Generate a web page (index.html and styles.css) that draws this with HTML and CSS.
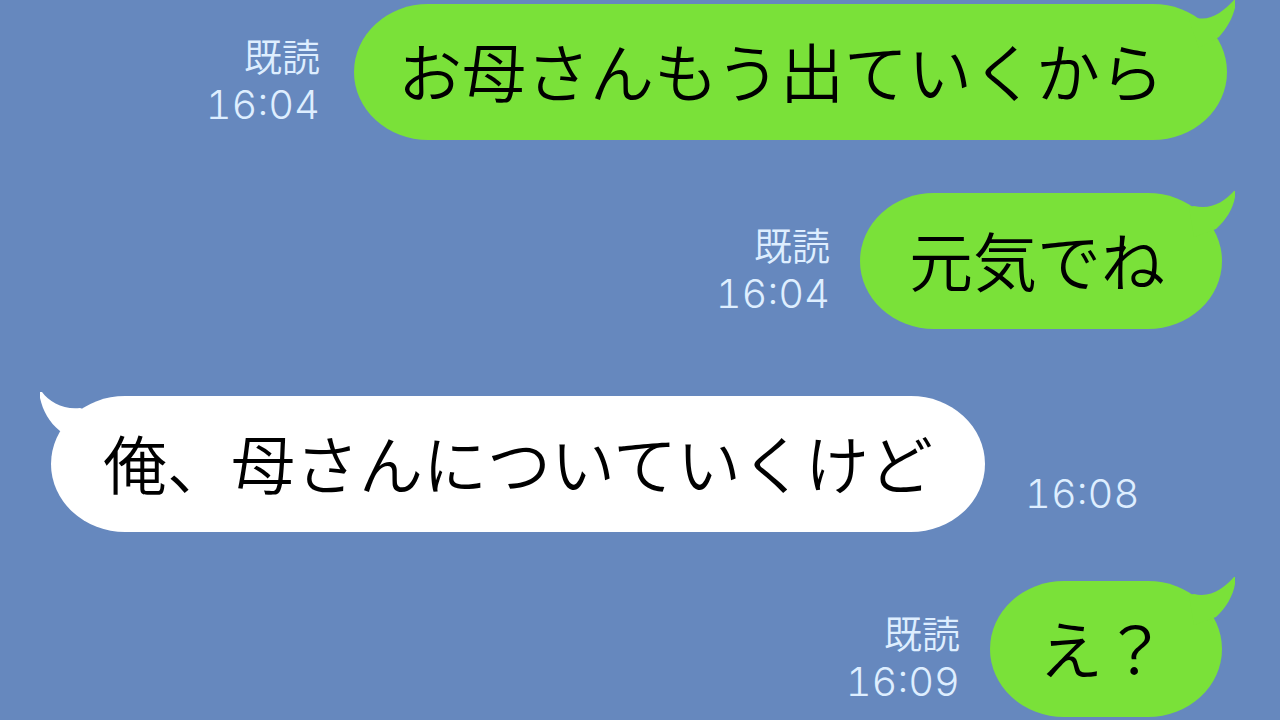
FILE: index.html
```html
<!DOCTYPE html>
<html lang="ja">
<head>
    <meta charset="UTF-8">
    <meta name="viewport" content="width=device-width, initial-scale=1.0">
    <title>トーク</title>
    <link rel="stylesheet" href="styles.css">
</head>
<body>

    <main class="talk">
        <div class="row sent long">
            <div class="meta">
                <span>既読</span>
                <time>16:04</time>
            </div>
            <div class="bubble">
                <p>お母さんもう出ていくから</p>
                <svg class="tail" viewBox="0 0 46 50" aria-hidden="true"><path d="M8 18C22 21 35 11 45 0H46V8C43 19 38 28 30 37L10 48L0 20Z"/></svg>
            </div>
        </div>
        <div class="row sent">
            <div class="meta">
                <span>既読</span>
                <time>16:04</time>
            </div>
            <div class="bubble">
                <p>元気でね</p>
                <svg class="tail" viewBox="0 0 46 50" aria-hidden="true"><path d="M5 17C22 21 35 13 45 2H46V8C44 20 37 31 27 40L5 48L0 18Z"/></svg>
            </div>
        </div>
        <div class="row received">
            <div class="bubble">
                <p>俺、母さんについていくけど</p>
                <svg class="tail" viewBox="0 0 46 50" aria-hidden="true"><path d="M40 16C24 18 9 10 2 0H0V6C3 19 9 30 20 39L41 48L46 18Z"/></svg>
            </div>
            <div class="meta">
                <time>16:08</time>
            </div>
        </div>
        <div class="row sent short">
            <div class="meta">
                <span>既読</span>
                <time>16:09</time>
            </div>
            <div class="bubble">
                <p>え？</p>
                <svg class="tail" viewBox="0 0 46 50" aria-hidden="true"><path d="M5 17C22 21 35 11 45 0H46V7C44 19 37 31 27 40L5 48L0 18Z"/></svg>
            </div>
        </div>
    </main>

</body>
</html>
```
FILE: styles.css
```css
*{ box-sizing:border-box;}
body, p{ margin:0; padding:0;}
body{
    min-height:100vh; background:#6688be; color:#000;
    font-family:"Noto Sans CJK JP", sans-serif; font-weight:350;
}
.talk{ padding:4px 58px 3px 51px;}

.row{ display:flex; align-items:flex-end;}
.sent{ justify-content:flex-end; gap:30px; margin-bottom:53px;}
.sent:last-child{ margin-bottom:0;}
.received{ gap:40px; margin-top:67px; margin-bottom:49px;}
.long{ margin-right:-5px; gap:34px;}

/* 吹き出し */
.bubble{
    position:relative; padding:33px 52px 39px;
    border-radius:74px / 68px;
    font-size:64px; line-height:64px; white-space:nowrap;
}
.sent .bubble{ background:#7ae139; padding-left:49px; padding-right:57px;}
.long .bubble{ padding-left:44px; padding-right:63px;}
.short .bubble{ padding-left:49px; padding-right:55px;}
.received .bubble{ background:#fff;}

.tail{ position:absolute; top:-4px; width:46px; height:50px;}
.sent .tail{ right:-13px; fill:#7ae139;}
.long .tail{ right:-8px;}
.received .tail{ left:-11px; fill:#fff;}

/* 既読と時刻 */
.meta{
    display:flex; flex-direction:column; align-items:flex-end; gap:2px;
    padding-bottom:11px; color:#deeeff;
    font-size:38px; line-height:48px; white-space:nowrap;
}
.received .meta{ padding-bottom:14px;}
.meta time{
    font-family:Inter, "Noto Sans CJK JP", sans-serif; font-size:40px; font-weight:300;
    font-variant-numeric:tabular-nums;
}
```
